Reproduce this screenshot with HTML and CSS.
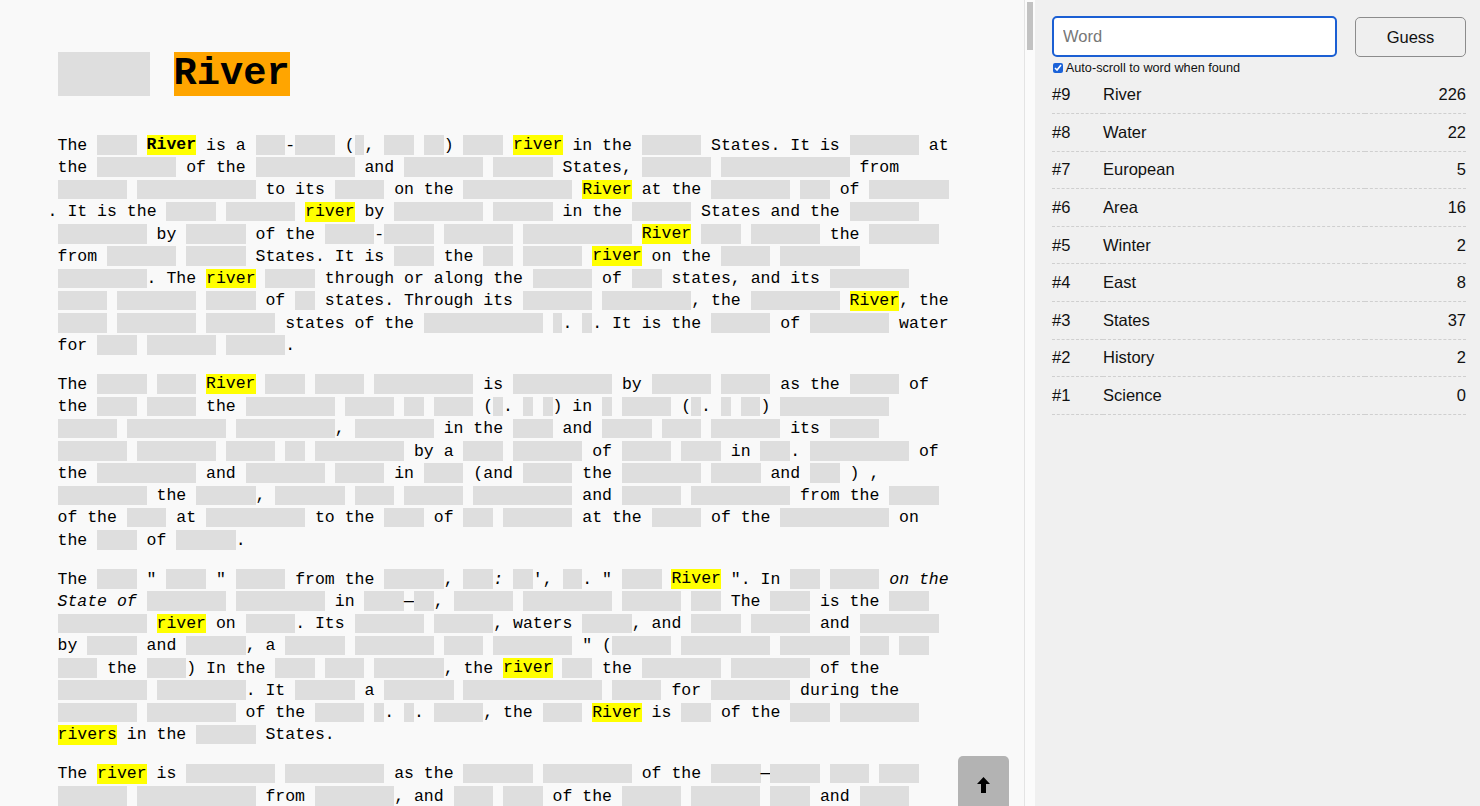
FILE: index.html
```html
<!DOCTYPE html>
<html lang="en">
<head>
<meta charset="utf-8">
<title>Redacted</title>
<link rel="stylesheet" href="styles.css">
</head>
<body>
<main class="reader">
  <article class="article">
    <h1 class="title"><span class="r w4"></span> <mark class="hit">River</mark></h1>

    <p>The <span class="r w4"></span> <mark><b>River</b></mark> is a <span class="r w3"></span>-<span class="r w4"></span> (<span class="r w1"></span>, <span class="r w3"></span> <span class="r w2"></span>) <span class="r w4"></span> <mark>river</mark> in the <span class="r w6"></span> States. It is <span class="r w7"></span> at
    the <span class="r w8"></span> of the <span class="r w10"></span> and <span class="r w8"></span> <span class="r w6"></span> States, <span class="r w7"></span> <span class="r w13"></span> from
    <span class="r w7"></span> <span class="r w12"></span> to its <span class="r w5"></span> on the <span class="r w11"></span> <mark>River</mark> at the <span class="r w8"></span> <span class="r w3"></span> of <span class="r w8"></span><br><span class="lead">.</span> It is the <span class="r w5"></span> <span class="r w7"></span> <mark>river</mark> by <span class="r w9"></span> <span class="r w6"></span> in the <span class="r w6"></span> States and the <span class="r w7"></span>
    <span class="r w9"></span> by <span class="r w6"></span> of the <span class="r w5"></span>-<span class="r w5"></span> <span class="r w7"></span> <span class="r w11"></span> <mark>River</mark> <span class="r w4"></span> <span class="r w7"></span> the <span class="r w7"></span>
    from <span class="r w7"></span> <span class="r w6"></span> States. It is <span class="r w4"></span> the <span class="r w3"></span> <span class="r w6"></span> <mark>river</mark> on the <span class="r w5"></span> <span class="r w8"></span>
    <span class="r w9"></span>. The <mark>river</mark> <span class="r w5"></span> through or along the <span class="r w6"></span> of <span class="r w3"></span> states, and its <span class="r w8"></span>
    <span class="r w5"></span> <span class="r w8"></span> <span class="r w5"></span> of <span class="r w2"></span> states. Through its <span class="r w7"></span> <span class="r w9"></span>, the <span class="r w9"></span> <mark>River</mark>, the
    <span class="r w5"></span> <span class="r w8"></span> <span class="r w7"></span> states of the <span class="r w12"></span> <span class="r w1"></span>. <span class="r w1"></span>. It is the <span class="r w6"></span> of <span class="r w8"></span> water
    for <span class="r w4"></span> <span class="r w7"></span> <span class="r w6"></span>.</p>

    <p>The <span class="r w5"></span> <span class="r w4"></span> <mark>River</mark> <span class="r w4"></span> <span class="r w5"></span> <span class="r w10"></span> is <span class="r w10"></span> by <span class="r w6"></span> <span class="r w5"></span> as the <span class="r w5"></span> of
    the <span class="r w4"></span> <span class="r w5"></span> the <span class="r w9"></span> <span class="r w5"></span> <span class="r w2"></span> <span class="r w4"></span> (<span class="r w1"></span>. <span class="r w1"></span> <span class="r w1"></span>) in <span class="r w1"></span> <span class="r w5"></span> (<span class="r w1"></span>. <span class="r w1"></span> <span class="r w2"></span>) <span class="r w11"></span>
    <span class="r w6"></span> <span class="r w10"></span> <span class="r w10"></span>, <span class="r w8"></span> in the <span class="r w4"></span> and <span class="r w5"></span> <span class="r w4"></span> <span class="r w7"></span> its <span class="r w5"></span>
    <span class="r w7"></span> <span class="r w8"></span> <span class="r w5"></span> <span class="r w2"></span> <span class="r w9"></span> by a <span class="r w4"></span> <span class="r w7"></span> of <span class="r w5"></span> <span class="r w4"></span> in <span class="r w3"></span>. <span class="r w10"></span> of
    the <span class="r w10"></span> and <span class="r w8"></span> <span class="r w5"></span> in <span class="r w4"></span> (and <span class="r w5"></span> the <span class="r w8"></span> <span class="r w5"></span> and <span class="r w3"></span> ) ,
    <span class="r w9"></span> the <span class="r w6"></span>, <span class="r w7"></span> <span class="r w4"></span> <span class="r w6"></span> <span class="r w10"></span> and <span class="r w6"></span> <span class="r w10"></span> from the <span class="r w5"></span>
    of the <span class="r w4"></span> at <span class="r w10"></span> to the <span class="r w4"></span> of <span class="r w3"></span> <span class="r w7"></span> at the <span class="r w5"></span> of the <span class="r w11"></span> on
    the <span class="r w4"></span> of <span class="r w6"></span>.</p>

    <p>The <span class="r w4"></span> " <span class="r w4"></span> " <span class="r w5"></span> from the <span class="r w6"></span>, <span class="r w3"></span><i>:</i> <span class="r w2"></span>', <span class="r w2"></span>. " <span class="r w4"></span> <mark>River</mark> ". In <span class="r w3"></span> <span class="r w5"></span> <i>on the
    State of</i> <span class="r w8"></span> <span class="r w9"></span> in <span class="r w4"></span>—<span class="r w2"></span>, <span class="r w6"></span> <span class="r w9"></span> <span class="r w6"></span> <span class="r w3"></span> The <span class="r w4"></span> is the <span class="r w4"></span>
    <span class="r w9"></span> <mark>river</mark> on <span class="r w5"></span>. Its <span class="r w7"></span> <span class="r w6"></span>, waters <span class="r w5"></span>, and <span class="r w5"></span> <span class="r w6"></span> and <span class="r w8"></span>
    by <span class="r w5"></span> and <span class="r w6"></span>, a <span class="r w6"></span> <span class="r w8"></span> <span class="r w4"></span> <span class="r w8"></span> " (<span class="r w6"></span> <span class="r w9"></span> <span class="r w7"></span> <span class="r w3"></span> <span class="r w3"></span>
    <span class="r w4"></span> the <span class="r w4"></span>) In the <span class="r w4"></span> <span class="r w4"></span> <span class="r w7"></span>, the <mark>river</mark> <span class="r w3"></span> the <span class="r w8"></span> <span class="r w8"></span> of the
    <span class="r w9"></span> <span class="r w9"></span>. It <span class="r w6"></span> a <span class="r w7"></span> <span class="r w14"></span> <span class="r w5"></span> for <span class="r w8"></span> during the
    <span class="r w8"></span> <span class="r w9"></span> of the <span class="r w5"></span> <span class="r w1"></span>. <span class="r w1"></span>. <span class="r w5"></span>, the <span class="r w4"></span> <mark>River</mark> is <span class="r w3"></span> of the <span class="r w4"></span> <span class="r w8"></span>
    <mark>rivers</mark> in the <span class="r w6"></span> States.</p>

    <p>The <mark>river</mark> is <span class="r w9"></span> <span class="r w10"></span> as the <span class="r w7"></span> <span class="r w9"></span> of the <span class="r w5"></span>—<span class="r w5"></span> <span class="r w4"></span> <span class="r w4"></span>
    <span class="r w7"></span> <span class="r w12"></span> from <span class="r w8"></span>, and <span class="r w4"></span> <span class="r w4"></span> of the <span class="r w6"></span> <span class="r w7"></span> <span class="r w4"></span> and <span class="r w5"></span>
    <span class="r w6"></span> <span class="r w9"></span> of the <span class="r w8"></span> <span class="r w5"></span> and the <span class="r w7"></span> <span class="r w10"></span>. The <mark>river</mark> is <span class="r w6"></span> by <span class="r w4"></span> <span class="r w8"></span>.</p>

    <p>The <span class="r w6"></span> <span class="r w9"></span> of the <mark>river</mark> <span class="r w4"></span> <span class="r w7"></span> in the <span class="r w5"></span> <span class="r w8"></span>, and the <span class="r w6"></span> <span class="r w10"></span> <span class="r w5"></span> <span class="r w4"></span> <span class="r w9"></span> of <span class="r w7"></span> <span class="r w6"></span> in <span class="r w4"></span>. <span class="r w8"></span> <span class="r w5"></span> the <span class="r w7"></span> <span class="r w3"></span> <span class="r w11"></span> <span class="r w6"></span> from the <span class="r w9"></span> <span class="r w5"></span>.</p>

    <p>In <span class="r w4"></span>, the <span class="r w8"></span> <span class="r w6"></span> <span class="r w10"></span> <span class="r w4"></span> the <mark>river</mark> <span class="r w7"></span> <span class="r w5"></span> of the <span class="r w9"></span> <span class="r w6"></span>, <span class="r w3"></span> <span class="r w8"></span> and <span class="r w6"></span> <span class="r w4"></span> <span class="r w10"></span> of <span class="r w5"></span> <span class="r w7"></span>. <span class="r w6"></span> <span class="r w9"></span> <span class="r w4"></span> water <span class="r w8"></span> the <span class="r w5"></span> <span class="r w6"></span>.</p>
  </article>

  <button class="to-top" type="button" aria-label="Back to top">
    <svg width="13" height="16" viewBox="0 0 13 16" aria-hidden="true"><path d="M6.5 0 L13 7 L9 7 L9 16 L4 16 L4 7 L0 7 Z" fill="#000"/></svg>
  </button>
</main>

<aside class="side">
  <form class="guess-form">
    <input class="word" type="text" placeholder="Word">
    <button class="guess" type="button">Guess</button>
  </form>
  <label class="auto"><input type="checkbox" checked> Auto-scroll to word when found</label>
  <table class="guesses">
    <tbody>
      <tr><td class="rank">#9</td><td>River</td><td class="count">226</td></tr>
      <tr><td class="rank">#8</td><td>Water</td><td class="count">22</td></tr>
      <tr><td class="rank">#7</td><td>European</td><td class="count">5</td></tr>
      <tr><td class="rank">#6</td><td>Area</td><td class="count">16</td></tr>
      <tr><td class="rank">#5</td><td>Winter</td><td class="count">2</td></tr>
      <tr><td class="rank">#4</td><td>East</td><td class="count">8</td></tr>
      <tr><td class="rank">#3</td><td>States</td><td class="count">37</td></tr>
      <tr><td class="rank">#2</td><td>History</td><td class="count">2</td></tr>
      <tr><td class="rank">#1</td><td>Science</td><td class="count">0</td></tr>
    </tbody>
  </table>
</aside>
</body>
</html>
```

FILE: styles.css
```css
* { box-sizing: border-box; }

html, body {
  margin: 0;
  height: 100%;
}

body {
  display: flex;
  overflow: hidden;
  font-family: "Liberation Sans", Arial, sans-serif;
  color: #111;
}

/* ---------- reading pane ---------- */
.reader {
  flex: 1 1 auto;
  height: 100vh;
  overflow-y: auto;
  scrollbar-width: none;
  /* slim scroll rail painted at the pane's right edge */
  background:
    linear-gradient(#c2c2c2, #c2c2c2) no-repeat calc(100% - 2px) 2px / 6px 48px,
    linear-gradient(#e4e4e4, #e4e4e4) no-repeat calc(100% - 10px) 0 / 1px 100%,
    linear-gradient(#fbfbfb, #fbfbfb) no-repeat 100% 0 / 10px 100%,
    #f9f9f9;
  font-family: "Liberation Mono", "Courier New", monospace;
  font-size: 16.5px;
  color: #000;
}
.reader::-webkit-scrollbar { display: none; }

.article {
  width: 953.5px;
  padding: 52px 0 60px 57.5px;
}

.title {
  margin: 0 0 37.5px;
  font-size: 38.7px;
  line-height: 43.85px;
  font-weight: bold;
}

.article p {
  margin: 0 0 16.75px;
  line-height: 22.25px;
}

.r {
  display: inline-block;
  height: 1.18em;
  vertical-align: -0.3em;
  background: #dedede;
}
.title .r { height: 1.133em; }

.w1 { width: 1ch; }
.w2 { width: 2ch; }
.w3 { width: 3ch; }
.w4 { width: 4ch; }
.w5 { width: 5ch; }
.w6 { width: 6ch; }
.w7 { width: 7ch; }
.w8 { width: 8ch; }
.w9 { width: 9ch; }
.w10 { width: 10ch; }
.w11 { width: 11ch; }
.w12 { width: 12ch; }
.w13 { width: 13ch; }
.w14 { width: 14ch; }

mark {
  background: #ffff00;
  color: inherit;
  padding: 0.4px 0;
}
mark.hit {
  background: #ffa500;
  padding: 0;
}

.lead { margin-left: -1ch; }

.to-top {
  position: fixed;
  left: 958px;
  top: 756px;
  width: 51px;
  height: 62px;
  display: flex;
  justify-content: center;
  align-items: flex-start;
  padding: 21px 0 0;
  border: none;
  border-radius: 5px;
  background: #b3b3b3;
  cursor: pointer;
}

/* ---------- guess panel ---------- */
.side {
  flex: 0 0 445px;
  background: #f0f0f0;
  padding: 16px 14px 0 17px;
  font-size: 16.5px;
}

.guess-form {
  display: flex;
  gap: 18px;
  margin: 0;
}

.word {
  width: 285px;
  height: 41px;
  padding: 0 9px;
  border: 2px solid #1b5fd3;
  border-radius: 5px;
  background: #fff;
  outline: none;
  font: 16.5px "Liberation Sans", Arial, sans-serif;
  color: #111;
}
.word::placeholder { color: #777; }

.guess {
  width: 111px;
  height: 40px;
  margin-top: 1px;
  border: 1px solid #8c8c8c;
  border-radius: 5px;
  background: #efefef;
  font: 16.5px "Liberation Sans", Arial, sans-serif;
  color: #111;
}

.auto {
  display: flex;
  align-items: center;
  height: 15px;
  margin-top: 3px;
  font-size: 12.7px;
  color: #111;
  white-space: pre;
}
.auto input {
  width: 10px;
  height: 10px;
  margin: 0 0 0 1px;
  accent-color: #1b62d8;
}

.guesses {
  width: 100%;
  border-collapse: collapse;
  margin-top: 1.4px;
}
.guesses td {
  padding: 8.8px 0;
  line-height: 19px;
  border-bottom: 1px dashed #cfcfcf;
}
.guesses .rank { width: 51px; }
.guesses .count { text-align: right; }
```
